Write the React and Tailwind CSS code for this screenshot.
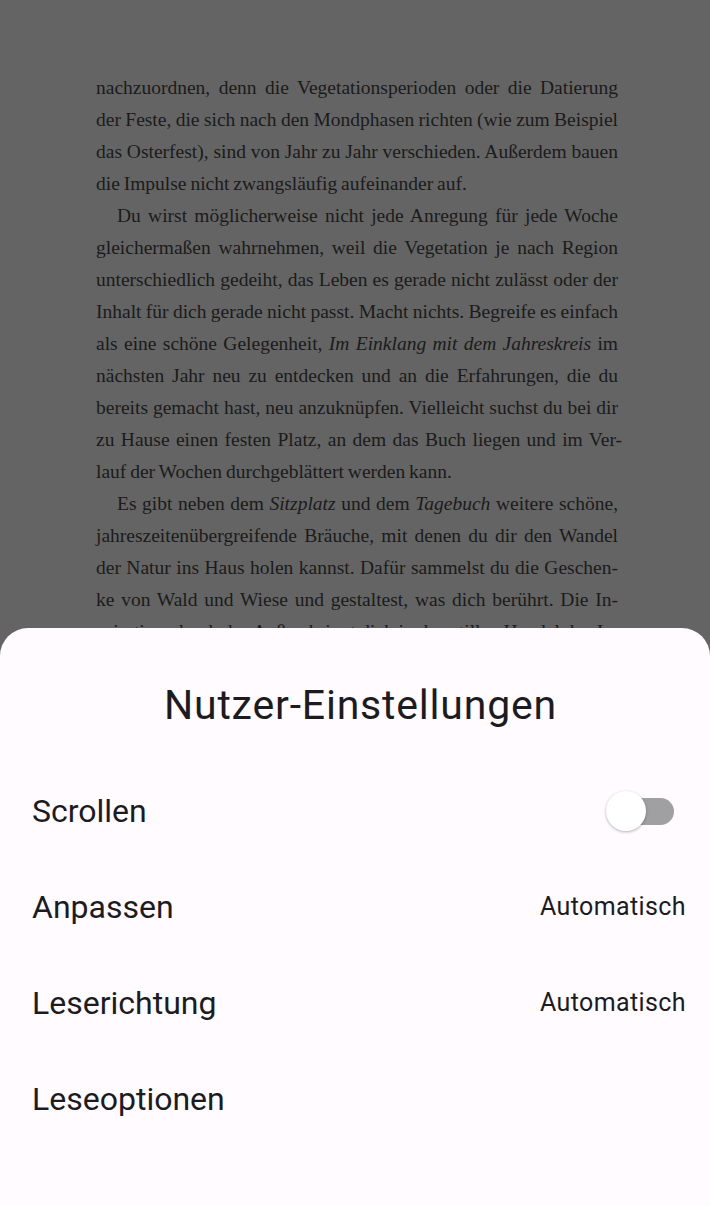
import React from 'react';

const LINES = [
  { t: 'nachzuordnen, denn die Vegetationsperioden oder die Datierung' },
  { t: 'der Feste, die sich nach den Mondphasen richten (wie zum Beispiel' },
  { t: 'das Osterfest), sind von Jahr zu Jahr verschieden. Außerdem bauen' },
  { t: 'die Impulse nicht zwangsläufig aufeinander auf.', last: true },
  { t: 'Du wirst möglicherweise nicht jede Anregung für jede Woche', indent: true },
  { t: 'gleichermaßen wahrnehmen, weil die Vegetation je nach Region' },
  { t: 'unterschiedlich gedeiht, das Leben es gerade nicht zulässt oder der' },
  { t: 'Inhalt für dich gerade nicht passt. Macht nichts. Begreife es einfach' },
  {
    t: (
      <>
        als eine schöne Gelegenheit, <i>Im Einklang mit dem Jahreskreis</i> im
      </>
    ),
  },
  { t: 'nächsten Jahr neu zu entdecken und an die Erfahrungen, die du' },
  { t: 'bereits gemacht hast, neu anzuknüpfen. Vielleicht suchst du bei dir' },
  { t: 'zu Hause einen festen Platz, an dem das Buch liegen und im Ver-', wide: true },
  { t: 'lauf der Wochen durchgeblättert werden kann.', last: true },
  {
    t: (
      <>
        Es gibt neben dem <i>Sitzplatz</i> und dem <i>Tagebuch</i> weitere schöne,
      </>
    ),
    indent: true,
  },
  { t: 'jahreszeitenübergreifende Bräuche, mit denen du dir den Wandel' },
  { t: 'der Natur ins Haus holen kannst. Dafür sammelst du die Geschen-' },
  { t: 'ke von Wald und Wiese und gestaltest, was dich berührt. Die In-' },
  { t: 'spiration, durch das Außen bringt dich in den stillen Handel des Ja-' },
];

const Row = ({ label, value, children }) => (
  <div className="h-[96px] flex items-center justify-between pl-8 pr-6">
    <span className="text-[32px] text-[#1c1b1f] font-normal">{label}</span>
    {value && <span className="text-[25px] tracking-[0.4px] text-[#1c1b1f]">{value}</span>}
    {children}
  </div>
);

const Switch = () => (
  <div className="relative w-[70px] h-[40px] mr-[10px] flex items-center">
    <div className="ml-[8px] w-[60px] h-[27px] rounded-full bg-[#a09fa2]" />
    <div className="absolute left-0 top-0 w-[40px] h-[40px] rounded-full bg-white shadow-[0_1px_3px_rgba(0,0,0,0.3)]" />
  </div>
);

export default function App() {
  return (
    <div className="w-[710px] h-[1206px] overflow-hidden relative bg-[#646464] flex flex-col">
      <div className="pt-[72px] ml-[96px] w-[522px] font-['Liberation_Serif',serif] text-[19.5px] leading-[32px] [word-spacing:-1px] text-[#1b1b1b]">
        {LINES.map((l, i) => (
          <div
            key={i}
            className={
              (l.last ? 'text-left ' : 'text-justify [text-align-last:justify] ') +
              (l.indent ? 'pl-[21px] ' : '') +
              (l.wide ? 'mr-[-4px] ' : '') +
              'whitespace-nowrap'
            }
          >
            {l.t}
          </div>
        ))}
      </div>

      <div className="absolute left-0 right-0 top-[628px] bottom-0 bg-[#fffbfe] rounded-t-[28px] font-['Roboto',sans-serif]">
        <h1 className="text-center text-[41px] text-[#1c1b1f] font-normal pt-[50px] pl-[11px] leading-[54px] tracking-[0.8px]">
          Nutzer-Einstellungen
        </h1>
        <div className="mt-[31px] flex flex-col">
          <Row label="Scrollen">
            <Switch />
          </Row>
          <Row label="Anpassen" value="Automatisch" />
          <Row label="Leserichtung" value="Automatisch" />
          <Row label="Leseoptionen" />
        </div>
      </div>
    </div>
  );
}
